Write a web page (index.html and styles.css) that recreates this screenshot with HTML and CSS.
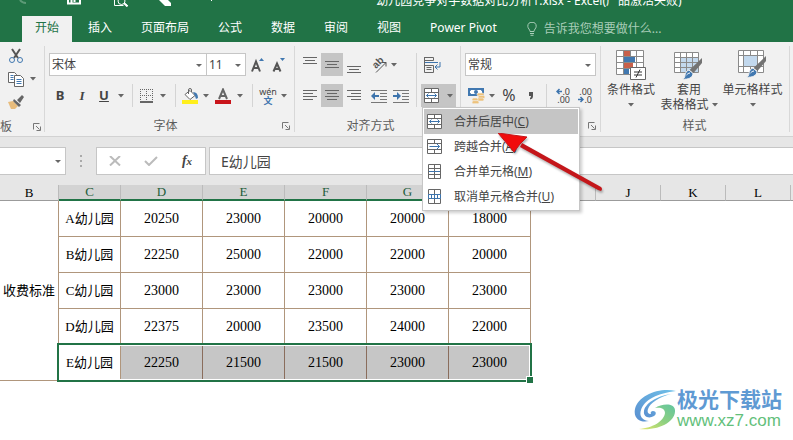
FILE: index.html
```html
<!DOCTYPE html>
<html lang="zh-CN">
<head>
    <meta charset="UTF-8">
    <meta name="viewport" content="width=device-width, initial-scale=1.0">
    <title>幼儿园竞争对手数据对比分析1.xlsx - Excel</title>
    <link rel="stylesheet" href="styles.css">
</head>
<body>

<!-- shared icons -->
<svg class="sprite" aria-hidden="true">
    <symbol id="i-caret" viewBox="0 0 6 4"><path d="M0 0h6L3 3.500z" fill="#666"/></symbol>
    <symbol id="i-launcher" viewBox="0 0 8 8"><path d="M.5 6.500v-6h6M3 3l3.500 3.500M7.500 3.500v4h-4" fill="none" stroke="#777"/></symbol>
    <symbol id="i-merge" viewBox="0 0 16 16">
        <path d="M.5.5h14v14H.5zM.5 4.500h14M.5 10.500h14M7.500.5v4M7.500 10.500v4" fill="#fff" stroke="#666"/>
        <path d="M2.500 7.500h10M4.500 5.500l-2 2 2 2M10.500 5.500l2 2-2 2" fill="none" stroke="#3d74ad"/>
    </symbol>
    <symbol id="i-across" viewBox="0 0 16 16">
        <path d="M.5.5h14v14H.5zM.5 4.500h14M.5 10.500h14M7.500.5v4M7.500 10.500v4" fill="#fff" stroke="#666"/>
        <path d="M2.500 7.500h10M9.500 4.500l3 3-3 3" fill="none" stroke="#3d74ad"/>
    </symbol>
    <symbol id="i-cells" viewBox="0 0 16 16">
        <path d="M1.500.5h12v14h-12z" fill="#fff" stroke="#666"/>
        <path d="M1.500 4.500h12M1.500 10.500h12M7.500.5v14" stroke="#666"/>
        <path d="M2 7.500h11" stroke="#3d74ad"/>
    </symbol>
    <symbol id="i-unmerge" viewBox="0 0 16 16">
        <path d="M1.500.5h12v14h-12zM7.500.5v14" fill="#fff" stroke="#666"/>
        <path d="M1.500 5.500h12v4h-12zM4.500 5.500v4M7.500 5.500v4M10.500 5.500v4" fill="#fff" stroke="#3d74ad"/>
    </symbol>
    <symbol id="i-brush" viewBox="0 0 20 22">
        <path d="M19.500 0v5L11 15l-4-3z" fill="#737373"/>
        <path d="M6.500 12l4 3.500c0 4-5 6.500-10.500 5.500 3-1 2-3 3-5.500 1-2.500 2-3 3.500-3.500z" fill="#4178b0" stroke="#f1f1f1"/>
        <path d="M4 17c1-1 2-2 3.500-2" stroke="#fff" fill="none"/>
    </symbol>
</svg>

<header class="titlebar">
    <div class="quick-access">
        <svg width="265" height="7" viewBox="0 0 265 7" fill="none" stroke="#fff">
            <path d="M20 0q2 3 6 3" stroke="#5d9a77" stroke-width="2"/>
            <path d="M68 0v3.500h12V0M71.500 0v3M74.500 0v2" stroke-width="2"/>
            <path d="M114.500 0v5.500h9M126 4l2 2" stroke-width="1"/>
            <circle cx="121.500" cy="1" r="3.500"/><path d="M124 3l3.500 3.500" stroke-width="2"/>
            <path d="M159 0h9l3 3v3h-6z" fill="#fff" stroke="none"/>
            <path d="M211 0h1" stroke-width="2"/>
        </svg>
    </div>
    <div class="doc-title">幼儿园竞争对手数据对比分析1.xlsx - Excel(产品激活失败)</div>
</header>

<nav class="tabs">
    <a href="#" class="tab active">开始</a>
    <a href="#" class="tab">插入</a>
    <a href="#" class="tab">页面布局</a>
    <a href="#" class="tab">公式</a>
    <a href="#" class="tab">数据</a>
    <a href="#" class="tab">审阅</a>
    <a href="#" class="tab">视图</a>
    <a href="#" class="tab">Power Pivot</a>
    <button class="tell-me">
        <svg width="10" height="14" viewBox="0 0 10 14" fill="none" stroke="#a9cdb8"><path d="M3 9.500C3 7.500.8 6.500.8 4.300a4.200 4 0 0 1 8.400 0C9.200 6.500 7 7.500 7 9.500zM3 11.500h4M3.500 13.300h3"/></svg>
        告诉我您想要做什么...
    </button>
</nav>

<div class="ribbon">
    <section class="group clipboard">
        <div class="stack">
            <button class="tool" aria-label="剪切">
                <svg width="16" height="16" viewBox="0 0 16 16" fill="none"><path d="M4 1l6 9M12 1L6 10" stroke="#555" stroke-width="2"/><circle cx="4" cy="12" r="2.500" stroke="#4178b0"/><circle cx="12" cy="12" r="2.500" stroke="#4178b0"/></svg>
            </button>
            <div class="row">
                <button class="tool" aria-label="复制">
                    <svg width="16" height="15" viewBox="0 0 16 15" fill="#fff"><path d="M.5.5h6l2 2v8h-8z" stroke="#666"/><path d="M2.500 3.500h3M2.500 5.500h3M2.500 7.500h3" stroke="#4178b0"/><path d="M6.500 3.500h6l3 3v8h-9z" stroke="#666"/><path d="M8.500 7.500h5M8.500 9.500h5M8.500 11.500h5" stroke="#4178b0"/></svg>
                </button>
                <button class="caret" aria-label="复制选项"><svg width="6" height="4"><use href="#i-caret"/></svg></button>
            </div>
            <button class="tool" aria-label="格式刷">
                <svg width="16" height="16" viewBox="0 0 16 16"><path d="M0 8l5-1 5 5-3 3H3z" fill="#e8bc7c"/><path d="M6 5l7 6-2 2-6-6zM9 6l5-5 2 2-4 6z" fill="#666"/></svg>
            </button>
        </div>
        <div class="group-foot"><span class="group-name">板</span><button class="launcher" aria-label="剪贴板设置"><svg width="8" height="8"><use href="#i-launcher"/></svg></button></div>
    </section>

    <section class="group font">
        <div class="row">
            <span class="combo combo-font"><select aria-label="字体"><option>宋体</option></select></span>
            <span class="combo combo-size"><select aria-label="字号"><option>11</option></select></span>
            <button class="tool mid grow" aria-label="增大字号">
                <svg width="14" height="14" viewBox="0 0 14 14"><path d="M1 13.500L5 3.500l4 10M2.500 10h5" fill="none" stroke="#555" stroke-width="2"/><path d="M8 3h5l-2.500-3z" fill="#4178b0"/></svg>
            </button>
            <button class="tool" aria-label="减小字号">
                <svg width="14" height="14" viewBox="0 0 14 14"><path d="M1.500 13.500L5 5.500l3.500 8M3 11h4" fill="none" stroke="#555" stroke-width="2"/><path d="M8 0h5l-2.500 3z" fill="#4178b0"/></svg>
            </button>
        </div>
        <div class="row">
            <button class="tool bold">B</button>
            <button class="tool italic">I</button>
            <button class="tool underline">U</button>
            <button class="caret" aria-label="下划线选项"><svg width="6" height="4"><use href="#i-caret"/></svg></button>
            <span class="sep"></span>
            <button class="tool narrow" aria-label="边框">
                <svg width="14" height="14" viewBox="0 0 14 14" fill="none" stroke="#666"><path d="M0 .5h13M0 6.500h13M.5 0v12M6.500 0v12M12.500 0v12" stroke-dasharray="1 1"/><path d="M0 13h13" stroke-width="2"/></svg>
            </button>
            <button class="caret wide" aria-label="边框选项"><svg width="6" height="4"><use href="#i-caret"/></svg></button>
            <span class="sep"></span>
            <button class="tool narrow" aria-label="填充颜色">
                <svg width="17" height="16" viewBox="0 0 17 16"><path d="M8 2.500l5 5-5 4-5-5z" fill="#fff" stroke="#666"/><path d="M6.500 6V2q0-1.500 1.500-1.500t1.500 1.500v2" fill="none" stroke="#666"/><path d="M11 4q5 0 5 6l-2 1-1-3z" fill="#4178b0"/><path d="M0 12h16v4H0z" fill="#ffef1c"/></svg>
            </button>
            <button class="caret wide" aria-label="填充颜色选项"><svg width="6" height="4"><use href="#i-caret"/></svg></button>
            <button class="tool mid" aria-label="字体颜色">
                <svg width="16" height="16" viewBox="0 0 16 16"><path d="M4 11L8 1.500l4 9.500M5.500 8h5" fill="none" stroke="#666" stroke-width="2"/><path d="M0 12h16v4H0z" fill="#c9151b"/></svg>
            </button>
            <button class="caret wide" aria-label="字体颜色选项"><svg width="6" height="4"><use href="#i-caret"/></svg></button>
            <span class="sep"></span>
            <button class="tool mid pinyin"><span>wén</span><span class="han">文</span></button>
            <button class="caret" aria-label="拼音选项"><svg width="6" height="4"><use href="#i-caret"/></svg></button>
        </div>
        <div class="group-foot"><span class="group-name">字体</span><button class="launcher" aria-label="字体设置"><svg width="8" height="8"><use href="#i-launcher"/></svg></button></div>
    </section>

    <section class="group align">
        <div class="align-tools">
            <div class="rows">
                <div class="row">
                    <button class="tool" aria-label="顶端对齐"><svg width="14" height="16" viewBox="0 0 14 16" stroke="#666"><path d="M0 .5h14M2 3.500h10M0 6.500h14"/></svg></button>
                    <button class="tool on" aria-label="垂直居中"><svg width="14" height="16" viewBox="0 0 14 16" stroke="#666"><path d="M0 4.500h14M2 7.500h10M0 10.500h14"/></svg></button>
                    <button class="tool" aria-label="底端对齐"><svg width="14" height="16" viewBox="0 0 14 16" stroke="#666"><path d="M0 9.500h14M2 12.500h10M0 15.500h14"/></svg></button>
                    <button class="tool mid turn" aria-label="方向">
                        <svg width="18" height="18" viewBox="0 0 18 18" fill="none" stroke="#555"><path d="M6 16.500L16 6.500M12 6.500h4v4"/><text x="0" y="0" transform="translate(6 13) rotate(-45)" fill="#555" stroke="none">ab</text></svg>
                    </button>
                    <button class="caret slim" aria-label="方向选项"><svg width="6" height="4"><use href="#i-caret"/></svg></button>
                </div>
                <div class="row">
                    <button class="tool" aria-label="左对齐"><svg width="14" height="12" viewBox="0 0 14 12" stroke="#666"><path d="M0 .5h14M0 3.500h10M0 6.500h14M0 9.500h10"/></svg></button>
                    <button class="tool on" aria-label="居中"><svg width="14" height="12" viewBox="0 0 14 12" stroke="#666"><path d="M0 .5h14M2 3.500h10M0 6.500h14M2 9.500h10"/></svg></button>
                    <button class="tool" aria-label="右对齐"><svg width="14" height="12" viewBox="0 0 14 12" stroke="#666"><path d="M0 .5h14M4 3.500h10M0 6.500h14M4 9.500h10"/></svg></button>
                    <button class="tool mid turn" aria-label="减少缩进"><svg width="16" height="14" viewBox="0 0 16 14"><path d="M0 1.500h16M9 4.500h7M9 7.500h7M9 10.500h7M0 13.500h16" stroke="#777"/><path d="M0 7l4-4v3h4v2H4v3z" fill="#3d74ad"/></svg></button>
                    <button class="tool mid indent" aria-label="增加缩进"><svg width="16" height="14" viewBox="0 0 16 14"><path d="M0 1.500h16M9 4.500h7M9 7.500h7M9 10.500h7M0 13.500h16" stroke="#777"/><path d="M8 7L4 3v3H0v2h4v3z" fill="#3d74ad"/></svg></button>
                </div>
            </div>
            <span class="sep tall"></span>
            <div class="rows">
                <button class="tool" aria-label="自动换行">
                    <svg width="17" height="16" viewBox="0 0 17 16" fill="none"><path d="M.5 0v15.500M.5.5h9v3h-9M.5 8.500h9v7h-9M2.500 10.500h5M2.500 12.500h5" stroke="#666"/><path d="M1 5.500h13M16 5v5h-5M13.500 7.500L11 10l2.500 2.500" stroke="#3d74ad"/></svg>
                </button>
                <div class="merge on">
                    <button class="tool" aria-label="合并后居中"><svg width="16" height="16"><use href="#i-merge"/></svg></button>
                    <button class="caret slim" aria-label="合并选项"><svg width="6" height="4"><use href="#i-caret"/></svg></button>
                    <div class="menu">
                        <button class="menu-item hover"><svg width="16" height="16"><use href="#i-merge"/></svg><span>合并后居中(<u>C</u>)</span></button>
                        <button class="menu-item"><svg width="16" height="16"><use href="#i-across"/></svg><span>跨越合并(<u>A</u>)</span></button>
                        <button class="menu-item"><svg width="16" height="16"><use href="#i-cells"/></svg><span>合并单元格(<u>M</u>)</span></button>
                        <button class="menu-item"><svg width="16" height="16"><use href="#i-unmerge"/></svg><span>取消单元格合并(<u>U</u>)</span></button>
                    </div>
                </div>
            </div>
        </div>
        <div class="group-foot"><span class="group-name">对齐方式</span><button class="launcher" aria-label="对齐设置"><svg width="8" height="8"><use href="#i-launcher"/></svg></button></div>
    </section>

    <section class="group number">
        <div class="row">
            <span class="combo combo-number"><select aria-label="数字格式"><option>常规</option></select></span>
        </div>
        <div class="row">
            <button class="tool" aria-label="会计数字格式">
                <svg width="17" height="16" viewBox="0 0 17 16"><path d="M0 0h16v8H0z" fill="#4178b0"/><path d="M2 3q1 0 1-1h10q0 1 1 1v2q-1 0-1 1H3q0-1-1-1z" fill="#fff"/><circle cx="8" cy="4" r="2" fill="#4178b0"/><g fill="#edc27c" stroke="#f1f1f1" stroke-width=".6"><rect x="9" y="5" width="7" height="3" rx="1.500"/><rect x="10" y="7.500" width="7" height="3" rx="1.500"/><rect x="9" y="10" width="7" height="3" rx="1.500"/><rect x="4" y="10" width="6" height="3" rx="1.500"/><rect x="4" y="12.700" width="7" height="3" rx="1.500"/></g></svg>
            </button>
            <button class="caret slim" aria-label="货币选项"><svg width="6" height="4"><use href="#i-caret"/></svg></button>
            <button class="tool percent">%</button>
            <button class="tool mid" aria-label="千位分隔样式"><svg width="6" height="8" viewBox="0 0 6 8"><path d="M1 0h4v4q0 3-3 3.500V6q1-.5 1-2H1z" fill="#555"/></svg></button>
            <span class="sep"></span>
            <button class="tool decimals"><span><svg width="6" height="7" viewBox="0 0 6 7"><path d="M6 3.500H1M3.500 1L1 3.500 3.500 6" fill="none" stroke="#3d74ad" stroke-width="1.500"/></svg>.0</span><span>.00</span></button>
            <button class="tool decimals"><span>.00</span><span><svg width="6" height="7" viewBox="0 0 6 7"><path d="M0 3.500h5M2.500 1L5 3.500 2.500 6" fill="none" stroke="#3d74ad" stroke-width="1.500"/></svg>.0</span></button>
        </div>
        <div class="group-foot"><span class="group-name"></span><button class="launcher" aria-label="数字设置"><svg width="8" height="8"><use href="#i-launcher"/></svg></button></div>
    </section>

    <section class="group styles">
        <div class="big-tools">
            <button class="big">
                <svg width="30" height="30" viewBox="0 0 30 30">
                    <path d="M.5.5h27v24H.5z" fill="#fff"/>
                    <path d="M8 1h6v5H8zM8 13h9v5H8z" fill="#c8604a"/><path d="M8 7h11v5H8zM8 19h5v5H8z" fill="#4178b0"/>
                    <path d="M.5.5h27v24H.5zM.5 6.500h27M.5 12.500h27M.5 18.500h27M7.500.5v24M20.500.5v24M14.500.5v6" fill="none" stroke="#8a8a8a"/>
                    <path d="M14.500 17.500h15v12h-15z" fill="#fff" stroke="#666"/><path d="M18 22h8M18 25h8M24 19.500l-4 8" stroke="#333" fill="none"/>
                </svg>
                <span>条件格式</span>
                <svg width="6" height="4" class="down"><use href="#i-caret"/></svg>
            </button>
            <button class="big">
                <svg width="30" height="30" viewBox="0 0 30 30">
                    <path d="M.5 2.500h24v20H.5z" fill="#fff"/><path d="M7 8h17v15H7z" fill="#c3d9ee"/>
                    <path d="M.5 2.500h24v20H.5zM.5 7.500h24M.5 12.500h24M.5 17.500h24M6.500 2.500v20M12.500 2.500v20M18.500 2.500v20" fill="none" stroke="#8a8a8a"/>
                    <svg x="8" y="8" width="21" height="22"><use href="#i-brush"/></svg>
                </svg>
                <span>套用</span>
                <span class="with-caret">表格格式<svg width="6" height="4"><use href="#i-caret"/></svg></span>
            </button>
            <button class="big">
                <svg width="30" height="30" viewBox="0 0 30 30">
                    <path d="M.5.5h25v22H.5z" fill="#fff"/>
                    <path d="M.5.5h25v22H.5zM.5 5.500h25M.5 16.500h25M5.500.5v22M19.500.5v22M12.500.5v5M12.500 16.500v6" fill="none" stroke="#8a8a8a"/>
                    <path d="M6 6h13v10H6z" fill="#c3d9ee"/>
                    <svg x="8" y="6" width="21" height="22"><use href="#i-brush"/></svg>
                </svg>
                <span>单元格样式</span>
                <svg width="6" height="4" class="down"><use href="#i-caret"/></svg>
            </button>
        </div>
        <div class="group-foot"><span class="group-name">样式</span></div>
    </section>
</div>

<div class="formula-bar">
    <span class="combo name-box"><select aria-label="名称框"><option></option></select></span>
    <svg class="grip" width="2" height="12" viewBox="0 0 2 12" fill="#aaa"><path d="M0 0h2v2H0zM0 5h2v2H0zM0 10h2v2H0z"/></svg>
    <div class="fx-box">
        <button aria-label="取消"><svg width="12" height="10" viewBox="0 0 12 10"><path d="M1 0l10 9.500M11 0L1 9.500" stroke="#bbb" stroke-width="2"/></svg></button>
        <button aria-label="输入"><svg width="14" height="10" viewBox="0 0 14 10"><path d="M1 5l4 4 8-8" fill="none" stroke="#bbb" stroke-width="2"/></svg></button>
        <button class="fx">f<small>x</small></button>
    </div>
    <input class="formula" type="text" aria-label="编辑栏" value="E幼儿园">
</div>

<main class="sheet">
    <table>
        <colgroup>
            <col class="col-b"><col class="col-c">
            <col class="col-data"><col class="col-data"><col class="col-data"><col class="col-data"><col class="col-data">
            <col class="col-free"><col class="col-free"><col class="col-free"><col class="col-free"><col>
        </colgroup>
        <thead>
            <tr><th>B</th><th class="sel">C</th><th class="sel">D</th><th class="sel">E</th><th class="sel">F</th><th class="sel">G</th><th class="sel">H</th><th>I</th><th>J</th><th>K</th><th>L</th><th></th></tr>
        </thead>
        <tbody>
            <tr><td class="name" rowspan="5">收费标准</td><td class="name">A幼儿园</td><td>20250</td><td>23000</td><td>20000</td><td>20000</td><td>18000</td></tr>
            <tr><td class="name">B幼儿园</td><td>22250</td><td>25000</td><td>22000</td><td>22000</td><td>20000</td></tr>
            <tr><td class="name">C幼儿园</td><td>23000</td><td>23000</td><td>23000</td><td>23000</td><td>23000</td></tr>
            <tr><td class="name">D幼儿园</td><td>22375</td><td>20000</td><td>23500</td><td>24000</td><td>22000</td></tr>
            <tr class="selected"><td class="name">E幼儿园<span class="selection"></span></td><td>22250</td><td>21500</td><td>21500</td><td>23000</td><td>23000</td></tr>
        </tbody>
    </table>

    <div class="watermark">
        <svg width="42" height="42" viewBox="0 0 42 42">
            <defs>
                <linearGradient id="wm-blue" x1="0" y1="1" x2="1" y2="0"><stop offset="0" stop-color="#5a8fd0"/><stop offset="1" stop-color="#6fc0e8"/></linearGradient>
                <linearGradient id="wm-green" x1="0" y1="1" x2="1" y2="0"><stop offset="0" stop-color="#e4e86a"/><stop offset=".5" stop-color="#8ed080"/><stop offset="1" stop-color="#62c5a0"/></linearGradient>
            </defs>
            <path d="M42 2C26-2 4 6 1 20c-2 10 6 14 14 12-7-1-10-5-8-11C10 11 24 4 42 2z" fill="url(#wm-blue)"/>
            <path d="M37 5C22 7 11 15 10 22c-1 6 5 8 10 5 3-2 2-5-1-5-2 0-3 2-2 3-3 0-4-2-3-5 2-6 11-12 23-15z" fill="url(#wm-blue)"/>
            <path d="M21 19c6-4 19-6 20 2 1 11-15 21-36 19 14-1 25-8 26-16 0-5-5-6-10-5z" fill="url(#wm-green)"/>
        </svg>
        <div class="watermark-text">
            <strong>极光下载站</strong>
            <span>www.xz7.com</span>
        </div>
    </div>
</main>

<svg class="pointer" width="108" height="62" viewBox="0 0 108 62">
    <path d="M24 10l79 44q2 2 0 4l-3-1-78-43z" fill="#c4161a"/>
    <path d="M0 0l29 4-7 7-6 8z" fill="#f00c0c" stroke="#c4161a"/>
</svg>

</body>
</html>
```
FILE: styles.css
```css
* { box-sizing: border-box; }
body {
    margin: 0; min-height: 100vh; display: flex; flex-direction: column; overflow: hidden; position: relative;
    font-family: "Noto Sans", "Noto Sans CJK SC", sans-serif; font-size: 12px; line-height: 15px;
    color: #444; background: #fff;
}
button, select, input { font: inherit; color: inherit; }
button { border: 0; padding: 0; margin: 0; background: none; cursor: pointer; }
svg { display: block; flex: none; }
.sprite { position: absolute; width: 0; height: 0; }

/* title and tabs */
.titlebar { display: flex; height: 16px; overflow: hidden; background: #217346; color: #fff; }
.quick-access { width: 265px; }
.doc-title { flex: 1; display: flex; justify-content: center; align-items: flex-end; padding-bottom: 8px; white-space: nowrap; }
.tabs { display: flex; gap: 3px; height: 26px; padding-left: 22px; background: #217346; }
.tab { padding: 0 13px; line-height: 24px; color: #fff; text-decoration: none; white-space: nowrap; }
.tab.active { background: #f1f1f1; color: #217346; }
.tell-me { display: flex; align-items: center; gap: 7px; height: 25px; margin-left: 14px; color: #a9cdb8; white-space: nowrap; }

/* ribbon */
.ribbon { display: flex; height: 95px; padding: 4px 0; background: #f1f1f1; border-bottom: 1px solid #d2d2d2; }
.group { display: flex; flex-direction: column; gap: 8px; padding: 7px 4px 0 4px; border-right: 1px solid #d8d8d8; }
.row { display: flex; align-items: center; height: 23px; }
.tool { width: 22px; height: 23px; display: flex; align-items: center; justify-content: center; flex: none; }
.tool.mid { width: 20px; }
.tool.narrow { width: 18px; }
.caret { width: 12px; height: 23px; display: flex; align-items: center; justify-content: center; flex: none; }
.caret.wide { width: 14px; }
.caret.slim { width: 10px; }
.on { background: #c5c5c5; }
.sep { width: 1px; height: 23px; margin: 0 5px; background: #d4d4d4; flex: none; }
.sep.tall { height: 54px; margin: 0 4px 0 5px; }

.group-foot { display: flex; align-items: center; height: 12px; margin-top: 5px; line-height: 12px; color: #5c5c5c; }
.group-name { flex: 1; text-align: center; }

.combo { position: relative; display: block; background: #fff; border: 1px solid #c6c6c6; height: 23px; }
.combo select { appearance: none; width: 100%; height: 100%; padding: 0 2px; border: 0; background: none; }
.combo::after {
    content: ""; position: absolute; right: 4px; top: 50%; margin-top: -1px; pointer-events: none;
    border: 3px solid transparent; border-top-color: #666; border-bottom: 0;
}
.combo-font { width: 158px; }
.combo-size { width: 40px; margin-left: -1px; }
.combo-number { width: 131px; }

.clipboard { width: 45px; padding: 0 3px 0 0; gap: 4px; }
.stack { display: flex; flex-direction: column; gap: 3px; padding-left: 5px; }
.stack .tool, .stack .row { height: 20px; }
.clipboard .group-name { text-align: left; }

.grow { margin-left: 2px; }
.bold, .italic, .underline { font-weight: bold; font-size: 13px; }
.italic { font-family: "Liberation Serif", serif; font-style: italic; }
.underline { text-decoration: underline; }
.pinyin { flex-direction: column; font-size: 9px; line-height: 9px; }
.pinyin .han { color: #3d74ad; font-weight: bold; }

.align-tools { display: flex; }
.align .group-foot { padding-right: 6px; }
.rows { display: flex; flex-direction: column; gap: 8px; }
.turn { margin-left: 4px; }
.turn text { font: bold 10px "Liberation Sans", sans-serif; }
.indent { margin-left: 2px; }
.merge { position: relative; display: flex; width: 35px; gap: 2px; }

.menu {
    position: absolute; left: 1px; top: 100%; z-index: 2; width: 158px; padding: 1px;
    background: #fff; border: 1px solid #c6c6c6; box-shadow: 2px 2px 3px rgba(0, 0, 0, .2);
}
.menu-item { display: flex; align-items: center; gap: 11px; width: 100%; height: 25px; padding-left: 3px; white-space: nowrap; }
.menu-item.hover { background: #c5c5c5; }

.percent { width: 24px; font-size: 16px; }
.decimals { flex-direction: column; align-items: flex-end; padding-right: 4px; font-size: 9px; line-height: 8px; }
.decimals span { display: flex; align-items: center; }

.styles { padding: 4px 6px 0 5px; gap: 0; }
.big-tools { display: flex; height: 66px; }
.big { display: flex; flex-direction: column; align-items: center; width: 50px; white-space: nowrap; }
.big:nth-child(2) { width: 66px; }
.big:nth-child(3) { width: 61px; }
.big > svg:first-child { margin-bottom: 2px; }
.down { margin-top: 6px; }
.with-caret { display: flex; align-items: center; gap: 3px; }

/* formula bar */
.formula-bar { display: flex; align-items: center; height: 48px; background: #e6e6e6; }
.name-box { width: 66px; height: 28px; border-left: 0; }
.grip { margin: 0 14px; }
.fx-box { display: flex; width: 110px; height: 28px; background: #fff; border: 1px solid #c6c6c6; }
.fx-box button { flex: 1; display: flex; align-items: center; justify-content: center; }
.fx { font: italic bold 14px "Liberation Serif", serif; }
.fx small { font-size: 11px; }
.formula { flex: 1; min-width: 0; height: 28px; margin-left: 3px; padding: 0 11px; border: 1px solid #c6c6c6; border-right: 0; font-size: 14px; background: #fff; }

/* worksheet */
.sheet { flex: 1; position: relative; }
table { width: 100%; table-layout: fixed; border-collapse: separate; border-spacing: 0; font-family: "Liberation Serif", "Noto Sans CJK SC", serif; font-size: 14px; color: #000; }
.col-b { width: 59px; }
.col-c { width: 62px; }
.col-data { width: 82px; }
.col-free { width: 65px; }
th { height: 16px; padding: 0; font-size: 13px; font-weight: normal; line-height: 14px; background: #e6e6e6; border-right: 1px solid #bbb; border-bottom: 1px solid #9b9b9b; }
th.sel { background: #d3d3d3; color: #1e5c3a; border-bottom: 2px solid #217346; }
th:last-child { border-right: 0; }
td { height: 36px; padding: 0; text-align: center; border-right: 1px solid #b0967c; border-bottom: 1px solid #b0967c; }
td.name { font-size: 13px; white-space: nowrap; }
.selected { position: relative; }
.selected td + td { background: #c6c6c6; border-right-color: #8a6d5c; }
/* green frame round the selected cells */
.selection { position: absolute; left: 57px; top: -2px; width: 475px; height: 39px; border: 2px solid #217346; box-shadow: inset 0 0 0 1px #fff; }
.selection::after { content: ""; position: absolute; right: -3px; bottom: -3px; width: 6px; height: 6px; background: #217346; border: solid #fff; border-width: 1px 0 0 1px; }

.watermark { position: absolute; right: 11px; bottom: 8px; display: flex; align-items: center; gap: 1px; }
.watermark-text { display: flex; flex-direction: column; }
.watermark strong { font-size: 21px; line-height: 22px; color: #5f9ad3; }
.watermark span { font: 17px/22px "Liberation Sans", sans-serif; color: #63bf7b; }

.pointer { position: absolute; left: 498px; top: 133px; z-index: 3; filter: drop-shadow(1px 2px 1px rgba(0, 0, 0, .3)); pointer-events: none; }
```
